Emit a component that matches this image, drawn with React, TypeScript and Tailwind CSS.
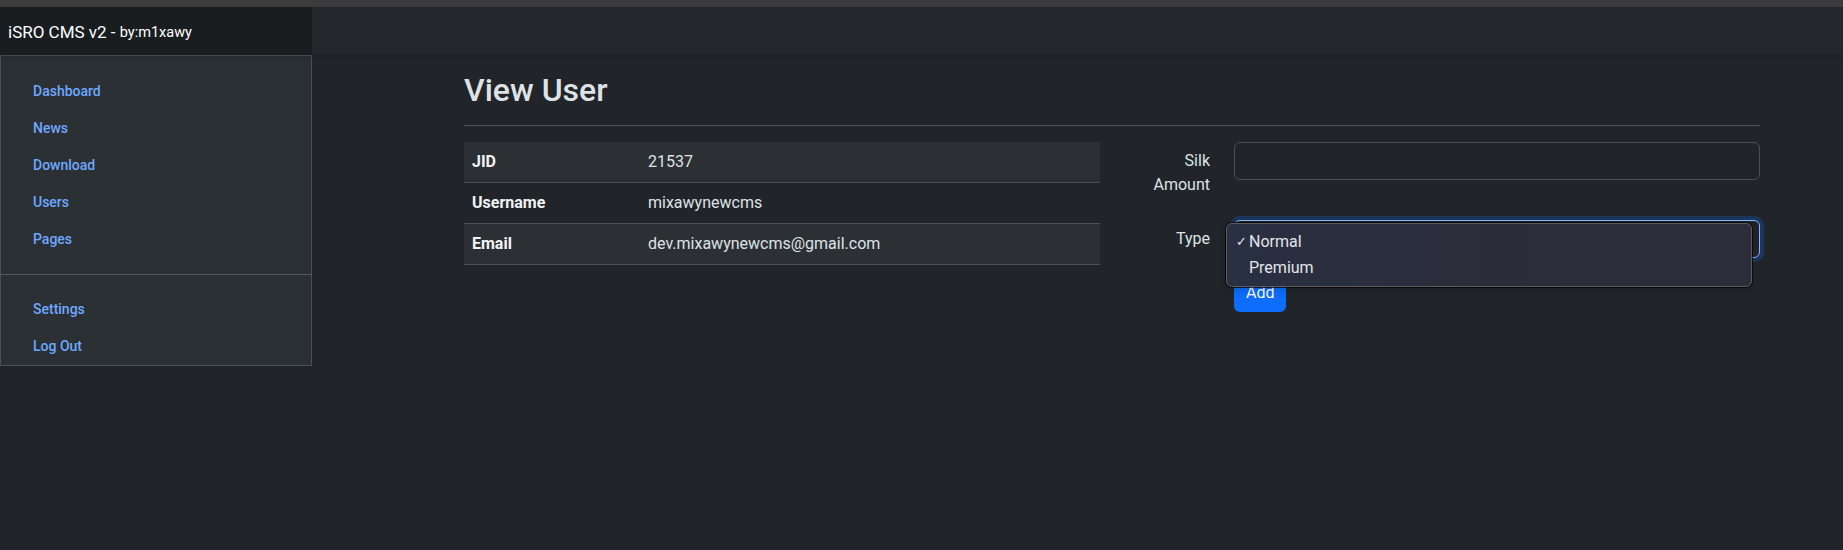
import React from 'react';

const links = ['Dashboard', 'News', 'Download', 'Users', 'Pages'];
const bottomLinks = ['Settings', 'Log Out'];

const rows = [
  { label: 'JID', value: '21537' },
  { label: 'Username', value: 'mixawynewcms' },
  { label: 'Email', value: 'dev.mixawynewcms@gmail.com' },
];

const Sidebar = () => (
  <aside className="w-[312px] shrink-0 self-start border border-[#495057] bg-[#2b3035] pt-[17px]">
    <ul>
      {links.map((l) => (
        <li key={l} className="flex h-[37px] items-center pl-[32px] text-[14px] font-medium text-[#6ea8fe]">
          {l}
        </li>
      ))}
    </ul>
    <hr className="my-4 border-t border-[#565a5f]" />
    <ul>
      {bottomLinks.map((l) => (
        <li key={l} className="flex h-[37px] items-center pl-[32px] text-[14px] font-medium text-[#6ea8fe]">
          {l}
        </li>
      ))}
    </ul>
  </aside>
);

const UserTable = () => (
  <div>
    {rows.map((r, i) => (
      <div
        key={r.label}
        className={`flex h-[41px] items-center border-b border-[#495057] text-[16px] ${i % 2 === 0 ? 'bg-[#2c3034]' : ''}`}
      >
        <div className="w-[176px] pl-2 font-bold text-[#f1f3f5]">{r.label}</div>
        <div className="pl-2 text-[#dee2e6]">{r.value}</div>
      </div>
    ))}
  </div>
);

const SilkForm = () => (
  <div className="grid grid-cols-[86px_1fr] gap-x-6 text-[16px]">
    <label className="w-min justify-self-end py-[7px] text-right leading-6">Silk Amount</label>
    <div>
      <div className="h-[38px] rounded-md border border-[#495057] bg-[#212529]" />
    </div>

    <label className="mt-4 py-[7px] text-right leading-6">Type</label>
    <div className="relative mt-4">
      <div className="h-[38px] rounded-md border border-[#86b7fe] bg-[#212529] pl-3 leading-[36px] shadow-[0_0_0_4px_rgba(13,110,253,0.25)]">
        Normal
      </div>
      {/* open native select menu */}
      <div className="absolute left-[-8px] top-[3px] z-10 w-[526px] rounded-[6px] border border-[#5a5a5f] bg-gradient-to-r from-[#283042] via-[#2b2c39] to-[#2d2c3a] py-[5px] text-[16px] text-[#e4e4ea] shadow-[0_0_0_1px_rgba(0,0,0,0.7),0_3px_8px_rgba(0,0,0,0.2)]">
        <div className="flex h-[26px] items-center">
          <span className="w-[22px] pl-[9px] text-[13px]">✓</span>
          <span>Normal</span>
        </div>
        <div className="flex h-[26px] items-center">
          <span className="w-[22px]" />
          <span>Premium</span>
        </div>
      </div>
    </div>

    <div />
    <div className="mt-4">
      <button className="h-[38px] rounded-md bg-[#0d6efd] px-3 text-[16px] text-white">Add</button>
    </div>
  </div>
);

export default function App() {
  return (
    <div className="min-h-[550px] bg-[#212529] font-['Roboto',sans-serif] text-[#dee2e6]">
      <div className="h-[7px] bg-[#3c3c3c]" />
      <header className="relative z-10 flex h-[48px] bg-[#23272b] shadow-[0_2px_4px_rgba(0,0,0,0.15)]">
        <div className="flex w-[312px] items-center bg-[#1a1d20] px-2 pt-[3px] text-[17px] text-white">
          iSRO CMS v2 -&nbsp;<small className="text-[14.5px]">by:m1xawy</small>
        </div>
      </header>
      <div className="flex">
        <Sidebar />
        <main className="flex-1 pl-[152px]">
          <div className="w-[1296px]">
            <div className="mb-4 border-b border-[#505459] pt-4 pb-2">
              <h2 className="mb-2 text-[32px] font-medium leading-[38px] text-[#dee2e6]">View User</h2>
            </div>
            <div className="grid grid-cols-2 gap-x-6">
              <UserTable />
              <SilkForm />
            </div>
          </div>
        </main>
      </div>
    </div>
  );
}
